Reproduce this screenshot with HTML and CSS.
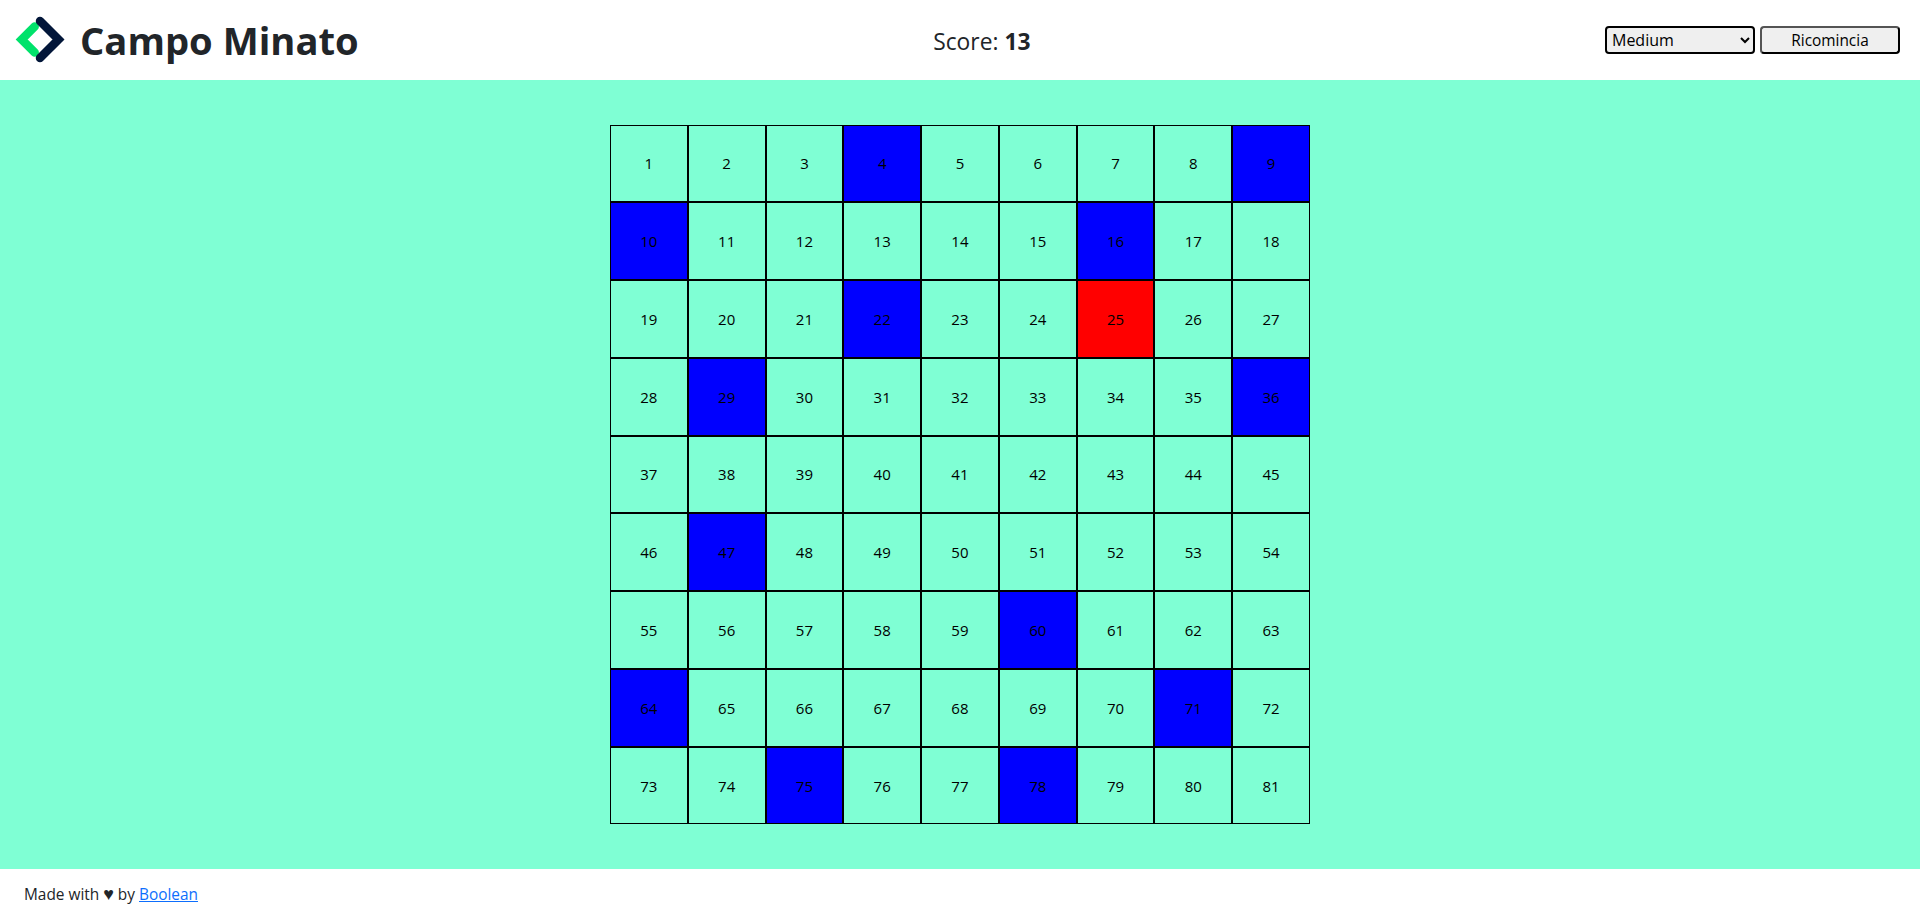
FILE: index.html
```html
<!DOCTYPE html>
<html lang="en">
<head>
  <meta charset="UTF-8">
  <meta name="viewport" content="width=device-width, initial-scale=1.0">
  <title>Campo Minato</title>
  <link rel="stylesheet" href="styles.css">
</head>
<body>
  <header class="topbar">
    <div class="brand">
      <svg class="logo" width="50" height="50" viewBox="0 0 50 50">
        <path class="logo-green" d="M19.7 11.5 L6.7 24.5 L19.7 37.5" />
        <path class="logo-dark" d="M25 6 L43.5 24.5 L25 43" />
      </svg>
      <h1 class="title">Campo Minato</h1>
    </div>
    <div class="score">Score: <b>13</b></div>
    <div class="controls">
      <select class="level">
        <option>Easy</option>
        <option selected>Medium</option>
        <option>Hard</option>
      </select>
      <button class="restart">Ricomincia</button>
    </div>
  </header>
  <main class="field">
    <div class="board" id="board"></div>
  </main>
  <footer class="bottombar">
    <span>Made with <span class="heart">♥</span> by <a href="#">Boolean</a></span>
  </footer>
  <script>
    const bombs = [4, 9, 10, 16, 22, 29, 36, 47, 60, 64, 71, 75, 78];
    for (let i = 1; i <= 81; i++) {
      let cell = document.createElement('div');
      cell.className = 'cell';
      if (bombs.includes(i)) cell.classList.add('bomb');
      if (i === 25) cell.classList.add('hit');
      cell.innerHTML = i;
      board.append(cell);
    }
  </script>
</body>
</html>
```

FILE: styles.css
```css
* {
  box-sizing: border-box;
}
body {
  margin: 0;
  height: 919px;
  display: flex;
  flex-direction: column;
  font-family: "Open Sans", "Noto Sans", sans-serif;
  color: #212529;
}
.topbar {
  height: 80px;
  display: flex;
  justify-content: space-between;
  align-items: center;
  padding: 0 20px 0 15px;
  background: #fff;
}
.brand {
  display: flex;
  align-items: center;
  gap: 15px;
}
.logo {
  display: block;
}
.logo-green, .logo-dark {
  fill: none;
  stroke-width: 8.5;
  stroke-linecap: round;
  stroke-linejoin: miter;
}
.logo-green {
  stroke: #00e26b;
}
.logo-dark {
  stroke: #021639;
}
.title {
  margin: 0;
  font-size: 38.2px;
  font-weight: 700;
}
.score {
  margin-top: 2px;
  font-size: 22.8px;
}
.controls {
  display: flex;
  gap: 5px;
}
.level {
  width: 150px;
  height: 28px;
  padding-left: 1px;
  font-family: "Open Sans", sans-serif;
  font-size: 16px;
  color: #000;
  background: #efefef;
  border: 2px solid #000;
  border-radius: 4px;
}
.restart {
  width: 140px;
  height: 28px;
  font-family: "Open Sans", sans-serif;
  font-size: 15.4px;
  border-radius: 4px;
}
.field {
  flex: 1;
  display: flex;
  justify-content: center;
  align-items: center;
  background: #7fffd4;
}
.board {
  width: 700px;
  height: 700px;
  display: flex;
  flex-wrap: wrap;
}
.cell {
  width: calc(100% / 9);
  height: calc(100% / 9);
  display: flex;
  justify-content: center;
  align-items: center;
  border: 1px solid #000;
  font-size: 15px;
  color: #000;
}
.bomb {
  background: #00f;
}
.hit {
  background: #f00;
}
.bottombar {
  height: 50px;
  display: flex;
  align-items: center;
  padding-left: 24px;
  background: #fff;
  font-size: 15.4px;
}
.heart {
  font-size: 18px;
  line-height: 1;
}
.bottombar a {
  color: #0d6efd;
}
```
